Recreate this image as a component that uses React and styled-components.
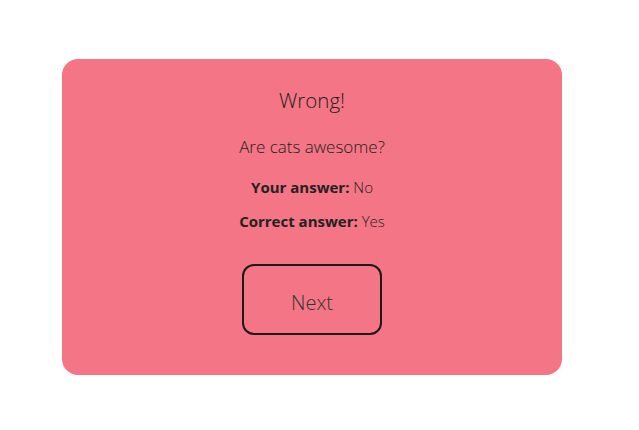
import React from "react";
import styled, { createGlobalStyle } from "styled-components";

const Global = createGlobalStyle`
body {
  margin: 0;
  background: #ffffff;
  font-family: "Open Sans", "Noto Sans", sans-serif;
  color: #222222;
}
`

const Page = styled.div`
box-sizing: border-box;
height: 430px;
padding: 59px 15px 0 0;
display: flex;
justify-content: center;
align-items: flex-start;
`

const Card = styled.div`
box-sizing: border-box;
width: 500px;
height: 316px;
background-color: #f47585;
border-radius: 16px;
display: flex;
flex-direction: column;
align-items: center;
padding-top: 28px;
`

const Title = styled.h2`
margin: 0;
font-size: 20.5px;
font-weight: 300;
line-height: 26px;
`

const Question = styled.p`
margin: 23px 0 0;
font-size: 17px;
font-weight: 300;
line-height: 22px;
`

const Answer = styled.p`
margin: ${(p) => p.$gap}px 0 0;
font-size: 15px;
font-weight: 300;
line-height: 20px;

> b {
  font-weight: 700;
}
`

const NextButton = styled.button`
box-sizing: border-box;
margin-top: 33px;
width: 140px;
height: 71px;
padding: 5px 0 0;
background: transparent;
border: 2px solid #1a1a1a;
border-radius: 12px;
font-family: inherit;
font-size: 20px;
font-weight: 300;
color: #333333;
cursor: pointer;
`

export default function App() {
  return (
    <>
      <Global />
      <Page>
        <Card>
          <Title>Wrong!</Title>
          <Question>Are cats awesome?</Question>
          <Answer $gap={19}><b>Your answer:</b> No</Answer>
          <Answer $gap={14}><b>Correct answer:</b> Yes</Answer>
          <NextButton>Next</NextButton>
        </Card>
      </Page>
    </>
  );
}
